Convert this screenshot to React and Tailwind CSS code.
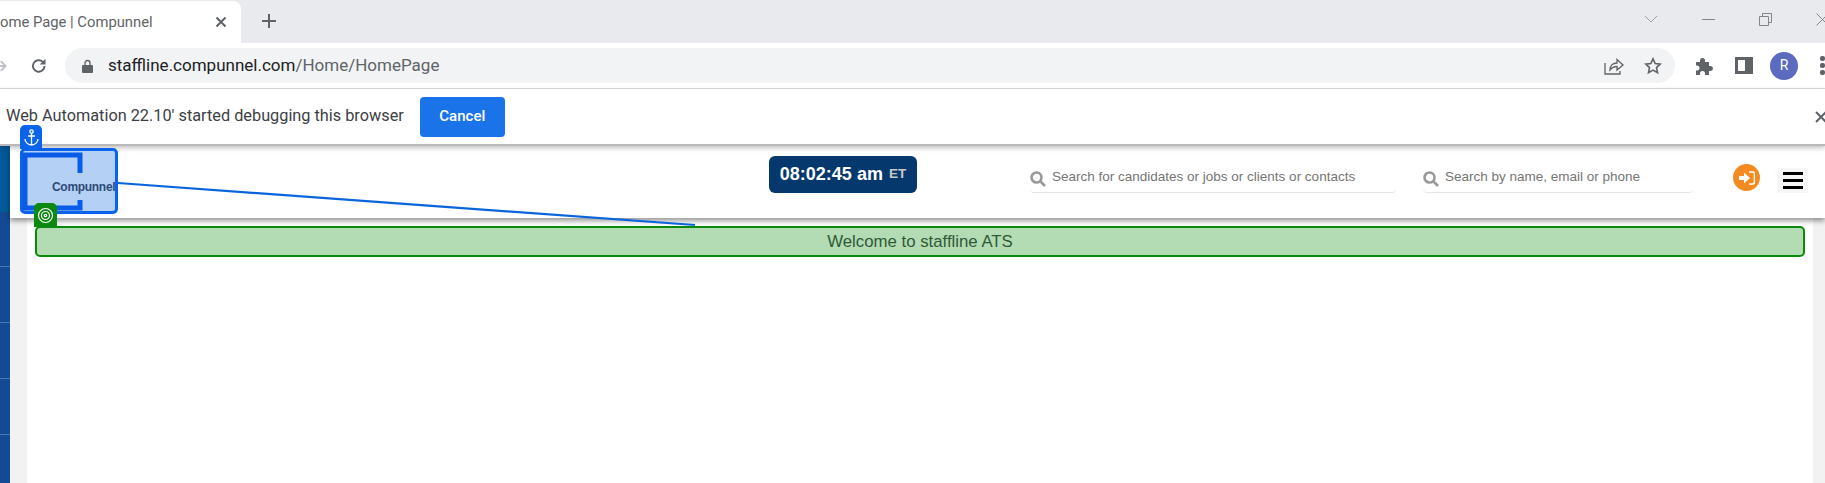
import React from 'react';

const sans = "font-['Roboto','Noto_Sans',sans-serif]";
const arial = "font-['Liberation_Sans',Arial,sans-serif]";

function Chevron() {
  return (
    <svg width="14" height="8" viewBox="0 0 14 8" fill="none" stroke="#9aa0a6">
      <path d="M1 1l6 6 6-6" />
    </svg>
  );
}

function ChromeTop() {
  return (
    <div className="h-[43px] flex bg-[#e8eaed] pt-px overflow-hidden">
      {/* active tab */}
      <div className="w-[241px] h-[42px] bg-white rounded-tr-lg flex items-center justify-between pr-[14px] shrink-0">
        <span className={`${sans} text-[14.8px] text-[#5f6368] whitespace-nowrap`}>ome Page | Compunnel</span>
        <svg width="12" height="12" viewBox="0 0 12 12" stroke="#5f6368" strokeWidth="2">
          <path d="M1.500 1.500l9 9M10.500 1.500l-9 9" />
        </svg>
      </div>
      <div className="w-[28px] ml-[14px] h-[40px] flex items-center justify-center">
        <svg width="16" height="16" viewBox="0 0 16 16" stroke="#5f6368" strokeWidth="2">
          <path d="M8 1v14M1 8h14" />
        </svg>
      </div>
      <div className="flex-1" />
      <div className="flex items-center h-[36px]">
        <div className="mr-[44px]"><Chevron /></div>
        <div className="w-[13px] h-px bg-[#80868b] mr-[44px]" />
        <svg className="mr-[44px]" width="13" height="13" viewBox="0 0 13 13" fill="none" stroke="#80868b">
          <path d="M.5 3.500h9v9h-9zM3.500 3.500v-3h9v9h-3" />
        </svg>
        <svg className="-mr-[4px]" width="13" height="13" viewBox="0 0 13 13" fill="none" stroke="#80868b">
          <path d="M.5.5l12 12M12.500.5l-12 12" />
        </svg>
      </div>
    </div>
  );
}

function ChromeToolbar() {
  return (
    <div className="h-[46px] bg-white border-b border-[#dadce0] flex items-center overflow-hidden">
      <svg className="-ml-[6px] mr-[22px]" width="14" height="14" viewBox="0 0 14 14" fill="none" stroke="#bdc1c6" strokeWidth="2">
        <path d="M0 7h12M7 2l5 5-5 5" />
      </svg>
      <svg width="18" height="18" viewBox="0 0 18 18" fill="none" stroke="#5f6368" strokeWidth="2">
        <path d="M15 9a6 6 0 1 1-1.800-4.300L15 6.500" />
        <path d="M16 1.500v6h-6" fill="#5f6368" stroke="none" />
      </svg>
      <div className="ml-[18px] w-[1610px] h-[35px] rounded-full bg-[#f1f3f4] flex items-center pl-[17px] pr-[13px] shrink-0">
        <svg width="11" height="14" viewBox="0 0 11 14" fill="#5f6368">
          <path d="M1 6h9a1 1 0 0 1 1 1v6a1 1 0 0 1-1 1H1a1 1 0 0 1-1-1V7a1 1 0 0 1 1-1z" />
          <path d="M3 6V4a2.500 2.500 0 0 1 5 0v2" fill="none" stroke="#5f6368" strokeWidth="1.300" />
        </svg>
        <span className={`${sans} ml-[15px] text-[17px] text-[#202124] whitespace-nowrap`}>
          staffline.compunnel.com<span className="text-[#5f6368]">/Home/HomePage</span>
        </span>
        <div className="flex-1" />
        <svg width="20" height="18" viewBox="0 0 20 18" fill="none" stroke="#5f6368" strokeWidth="1.300">
          <path d="M1 6v11h15v-3" />
          <path d="M6 13c0-5 3-7 7-7V2.500l6 5.500-6 5V9.500c-3 0-5 1-7 3.500z" />
        </svg>
        <svg className="ml-[20px]" width="18" height="18" viewBox="0 0 18 18" fill="none" stroke="#5f6368" strokeWidth="1.600">
          <path d="M9 1.800l2.200 4.700 5 .6-3.700 3.500 1 5L9 13.100l-4.500 2.500 1-5L1.800 7.100l5-.6z" />
        </svg>
      </div>
      <svg className="ml-[20px] shrink-0" width="18" height="18" viewBox="0 0 18 18" fill="#5f6368">
        <path d="M1 5h4V3.500a2.500 2.500 0 0 1 5 0V5h4v4h1.500a2.500 2.500 0 0 1 0 5H14v4h-4v-1.500a2.500 2.500 0 0 0-5 0V18H1v-4.500h1a2.500 2.500 0 0 0 0-5H1z" />
      </svg>
      <div className="ml-[22px] w-[18px] h-[17px] border-[3px] border-[#5f6368] flex justify-end bg-white shrink-0">
        <div className="w-[5px] bg-[#5f6368]" />
      </div>
      <div className={`${sans} ml-[17px] w-[28px] h-[28px] rounded-full bg-[#5c6bc0] text-white text-[14px] flex items-center justify-center shrink-0`}>R</div>
      <div className="ml-[22px] flex flex-col gap-[2px] shrink-0">
        <div className="w-[5px] h-[5px] rounded-[2px] bg-[#5f6368]" />
        <div className="w-[5px] h-[5px] rounded-[2px] bg-[#5f6368]" />
        <div className="w-[5px] h-[5px] rounded-[2px] bg-[#5f6368]" />
      </div>
    </div>
  );
}

function DebugBar() {
  return (
    <div className="h-[57px] bg-white border-b-2 border-[#b9b9b9] shadow-[0_2px_5px_rgba(0,0,0,0.25)] flex items-center relative z-20">
      <span className={`${sans} pl-[6px] text-[16.3px] text-[#3c4043] whitespace-nowrap`}>Web Automation 22.10' started debugging this browser</span>
      <button className={`${sans} ml-[16px] w-[85px] h-[40px] rounded bg-[#1a73e8] text-white text-[15px] font-medium`}>Cancel</button>
      <div className="flex-1" />
      <svg className="-mr-[2px]" width="12" height="12" viewBox="0 0 12 12" stroke="#5f6368" strokeWidth="2">
        <path d="M1 1l10 10M11 1L1 11" />
      </svg>
    </div>
  );
}

function SearchBox({ width, text }) {
  return (
    <div className={`${width} h-[31px] flex items-center gap-[6px] border-b border-[#e6e6e6] rounded-b`}>
      <svg width="16" height="16" viewBox="0 0 16 16" fill="none" stroke="#999999" strokeWidth="2.600" className="mt-[3px] shrink-0">
        <circle cx="6.500" cy="6.500" r="5" />
        <path d="M10 10l5 5" />
      </svg>
      <span className={`${arial} text-[13.5px] text-[#757575] whitespace-nowrap`}>{text}</span>
    </div>
  );
}

function PageHeader() {
  return (
    <div className="h-[72px] bg-white shadow-[0_3px_5px_rgba(0,0,0,0.4)] relative z-10 flex items-start">
      <div className="w-[759px] shrink-0" />
      <div className={`${arial} mt-[10px] w-[148px] h-[37px] rounded-md bg-[#05396e] flex items-center justify-center gap-[6px] text-white font-bold text-[18px]`}>
        08:02:45 am <span className="text-[13.5px] text-[#c8c8c8]">ET</span>
      </div>
      <div className="ml-[113px] mt-[16px]"><SearchBox width="w-[366px]" text="Search for candidates or jobs or clients or contacts" /></div>
      <div className="ml-[27px] mt-[16px]"><SearchBox width="w-[270px]" text="Search by name, email or phone" /></div>
      <div className="ml-[40px] mt-[18px] w-[27px] h-[27px] rounded-full bg-[#f48b20] flex items-center justify-center">
        <svg width="16" height="14" viewBox="0 0 16 14" fill="white">
          <path d="M0 5h5V1.500L11 7l-6 5.500V9H0z" />
          <path d="M10 1h3.500A2 2 0 0 1 15.500 3v8a2 2 0 0 1-2 2H10" fill="none" stroke="white" strokeWidth="1.600" />
        </svg>
      </div>
      <div className="ml-[17px] mt-[22px] w-[31px] h-[25px] bg-[#f7f7f7] flex flex-col items-center justify-center gap-[4px]">
        <div className="w-[20px] h-[3px] bg-black" />
        <div className="w-[20px] h-[3px] bg-black" />
        <div className="w-[20px] h-[3px] bg-black" />
      </div>
    </div>
  );
}

// left menu strip, mostly hidden behind the page
function SideStrip() {
  return (
    <div className="w-[10px] shrink-0 flex flex-col bg-[#134a93]">
      <div className="h-[66px] bg-[#005a99]" />
      <div className="h-[55px] border-b border-[#4a78b0]" />
      <div className="h-[56px] border-b border-[#4a78b0]" />
      <div className="h-[56px] border-b border-[#4a78b0]" />
      <div className="h-[56px] border-b border-[#4a78b0]" />
    </div>
  );
}

function Logo() {
  return (
    <div className="absolute left-[20px] top-[148px] w-[98px] h-[66px] z-30 rounded-[5px] border-[3px] border-[#0a64eb] bg-[#b4d0f4]">
      <svg className="absolute -left-[1px] top-[1px]" width="61" height="59" viewBox="0 0 61 59" fill="none" stroke="#0a5ce8" strokeWidth="5">
        <path d="M58 21V3H3v53h55v-8" />
      </svg>
      <span className={`${arial} absolute left-[29px] top-[27px] text-[12px] font-bold text-[#2c4a78] tracking-tight whitespace-nowrap`}>Compunnel</span>
    </div>
  );
}

function Anchor() {
  return (
    <div className="absolute left-[20px] top-[125px] z-40 w-[22px] h-[24px] rounded-t-[5px] bg-[#0a64eb] flex items-center justify-center">
      <svg width="15" height="17" viewBox="0 0 15 17" fill="none" stroke="white" strokeWidth="1.300">
        <circle cx="7.500" cy="2.500" r="1.700" />
        <path d="M7.500 4v12M4 7h7M1 10c0 3 3 6 6.500 6s6.500-3 6.500-6" />
      </svg>
    </div>
  );
}

function Target() {
  return (
    <div className="absolute left-[34px] top-[203px] z-40 w-[23px] h-[24px] rounded-t-[5px] bg-[#0b8a0f] flex items-center justify-center">
      <svg width="17" height="17" viewBox="0 0 17 17" fill="none" stroke="white" strokeWidth="1.200">
        <circle cx="8.500" cy="8.500" r="7" />
        <circle cx="8.500" cy="8.500" r="4" />
        <circle cx="8.500" cy="8.500" r="1.200" />
      </svg>
    </div>
  );
}

export default function App() {
  return (
    <div className="w-[1825px] h-[483px] bg-white overflow-hidden relative">
      <ChromeTop />
      <ChromeToolbar />
      <DebugBar />
      <div className="flex h-[337px]">
        <SideStrip />
        <div className="flex-1 flex flex-col">
          <PageHeader />
          <div className="flex flex-1">
            <div className="w-[17px] bg-[#f2f2f2]" />
            <div className="flex-1 px-[8px] pt-[8px]">
              <div className={`${arial} h-[31px] rounded-[5px] border-[2px] border-[#098a0c] bg-[#b3dbb4] text-[#2f5a37] text-[16.8px] flex items-center justify-center`}>
                Welcome to staffline ATS
              </div>
            </div>
            <div className="w-[12px] bg-[#f2f2f2]" />
          </div>
        </div>
      </div>
      <Anchor />
      <Logo />
      <Target />
      {/* connector between the logo and the highlighted element */}
      <svg className="absolute left-0 top-0 z-30 pointer-events-none" width="1825" height="483" fill="none" stroke="#0a64dd" strokeWidth="2.200">
        <path d="M118 183L695 225" />
      </svg>
    </div>
  );
}
